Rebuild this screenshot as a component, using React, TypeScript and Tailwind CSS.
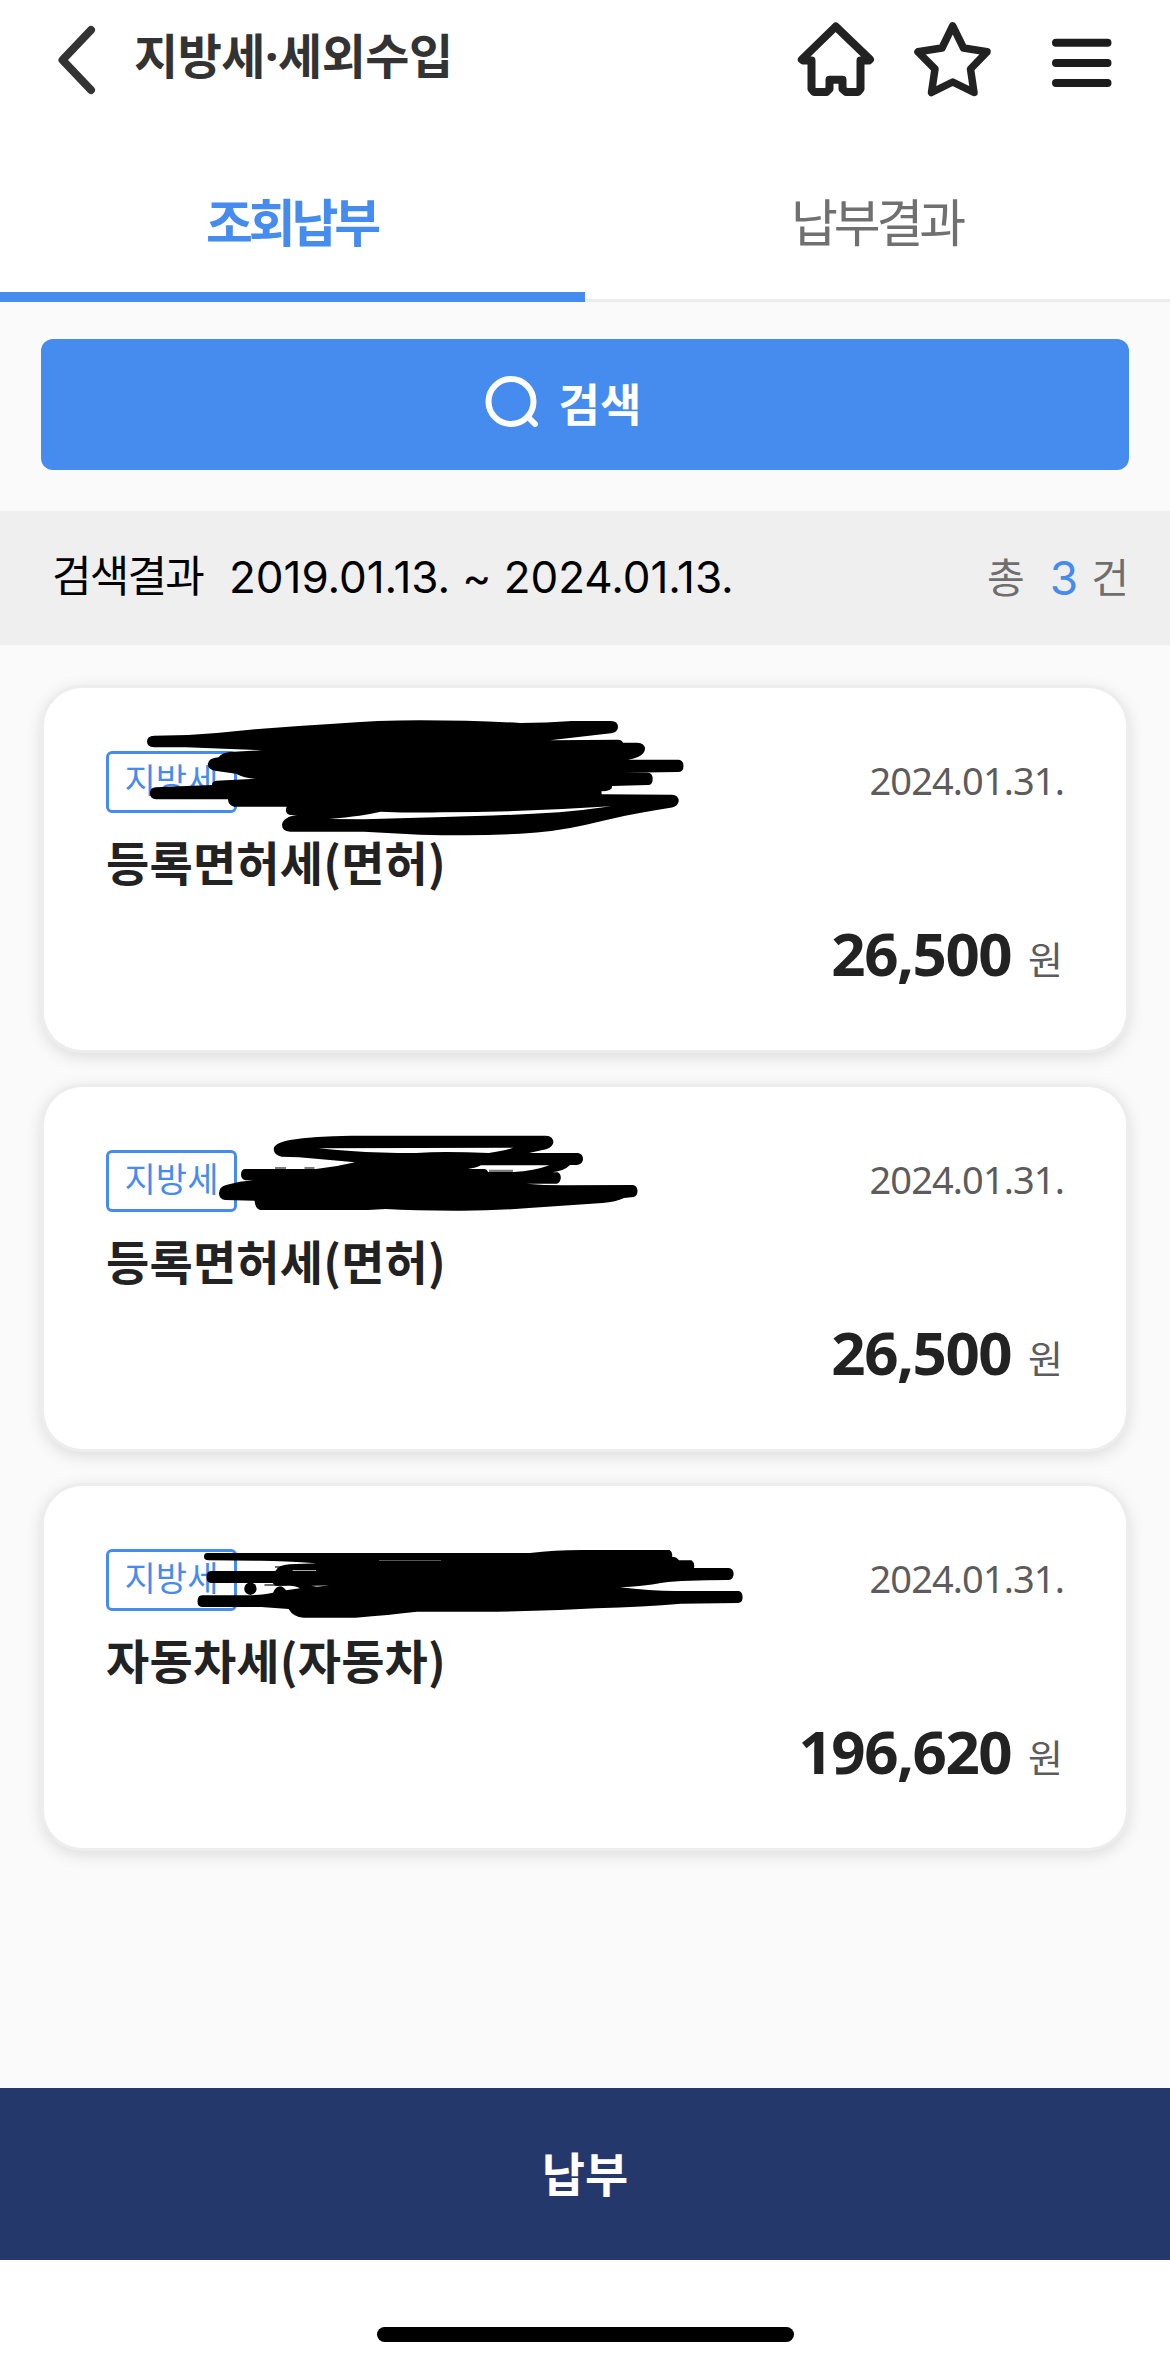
interface Bill {
  id: number;
  badge: string;
  title: string;
  dueDate: string;
  amount: string;
  scribble: React.ReactNode;
}

const bills: Bill[] = [
  {
    id: 1,
    badge: "지방세",
    title: "등록면허세(면허)",
    dueDate: "2024.01.31.",
    amount: "26,500",
    scribble: (
      <path
        fillRule="evenodd"
        d="M110 47.7L144 47Q178 45 211 41.3Q250 38 290 35.7Q335 32.3 376 32.3Q428 32.3 476 35Q502 35 528 33H567Q574 33 574 39Q574 44.5 567 45.3L506 52.3L574 51.7Q578 51.7 579 54.7H593Q601 55 601 61.3Q600 69 584 71.7H634Q639.5 72 639.5 78Q639.5 84 634 84L580 84.7H604Q608.7 85 608.7 91Q608.7 97 604 97L568 98Q569 103 557.5 103.3V106.3L628 106.7Q634.7 107 634.7 113.3Q634 118 628 119.5Q600 124 580 128Q562 132 541 137Q510 144 476 145.7Q448 147.3 420 147.3Q398 147.3 376 146.7L320 143.7H246Q238 143 238 136.7Q239 129 253 127H246Q240 125 242.7 118.7H190Q184 117 184 111.3H112Q106 111 106 105.3Q106 99.5 112 99.3L168 97Q168 93 172.5 92.7L211.5 90.7Q200 90 192 85.7L172.5 83Q164 82 163.8 76.3Q164 70 174.6 69.3Q178 65 185.5 64L218 62.3L142 59.3H110Q103 59 103 53.5Q103 48 110 47.7ZM285 131Q320 128 336.4 123.7Q370 125 398 124.3Q480 124 567 118.3Q542 122 515 124.3Q450 128 400 129L320 131.3Z"
      />
    ),
  },
  {
    id: 2,
    badge: "지방세",
    title: "등록면허세(면허)",
    dueDate: "2024.01.31.",
    amount: "26,500",
    scribble: (
      <>
        <path
          fillRule="evenodd"
          d="M229.7 62Q230 56 246 53Q270 49 307 48.7H502Q509 49 509.4 55.3Q509 60 502 62.3L485 66H534Q539 67 539 72Q539 77 533 78H526Q520 84 508.5 85.3H514Q517 87 516.8 91.3Q516 96 513 96.7H482.5Q500 98.3 519 98.3L589 98Q593.5 99 593.5 104Q593.5 109 589.6 110L580 111Q572 115 558.4 116L485 121Q448 124 411 123.7Q370 123.7 341.6 122L324 123H216Q211 121 210.6 113.7L181 113Q175 112 175 106.3Q175 100 182 98Q196 94 209.3 93.3H201.5Q197 92 197 87.7Q197 82 201.5 82H272Q292 80 311 75.3L255 70.3L237.5 69.7Q230 68 229.7 62ZM274.4 61.3L469.5 60.7Q460 64 444.8 66Q422 65 402 65Q387 65 372 66Q335 66 307 64Q290 63 274.4 61.3ZM437 78.3H505.5Q490 84 469.5 85H444Q443 82 440 82H424Q432 81 437 78.3Z"
        />
        <path className="fill-[#7b7b7b]" d="M231 80h11v2h-11zM260.5 80h10v2h-10zM445 82.7h24v2.3h-24z" />
      </>
    ),
  },
  {
    id: 3,
    badge: "지방세",
    title: "자동차세(자동차)",
    dueDate: "2024.01.31.",
    amount: "196,620",
    scribble: (
      <>
        <path className="fill-[#6b6b6b]" d="M220.5 98h22v2h-22zM231 80h14v2h-14z" />
        <path d="M163 67H486Q510 64 538 64H625.5Q629 66 628 70.7Q633 71 635 74.3H647.6Q651 77 650 82H684.5Q689.6 82.5 689.6 87.7Q689.6 93.5 684.5 94Q640 94 618.4 96.7Q598 100.5 576 101.3Q605 105 632.5 105H694.8Q698.6 106 698.6 111.3Q698.6 117 694 117L637 117.7Q600 121 552 122.3Q495 125.7 439 125.7H373Q345 129 311.6 131.7H259.7Q249 131 244.6 123L217 121H158Q153.5 121 153.5 115.3Q153.5 109.3 158 109.3H198.4Q218 109.5 229 106.7Q232 100.3 236 100.3Q239 100.3 242 104.3L256 102.3Q252 99.7 245.6 99.7H231.4L228.6 97H167.7Q162.5 97 162.5 90.7Q162.5 85 167.7 85H231.4Q234 79 245.6 78.3L272.5 77.3Q240 74.7 217 74.7L164.4 74.3Q160 74 160 70.7Q160 67 163 67Z" />
        <circle cx="206.4" cy="102.7" r="6.2" />
        <path className="fill-[#aaa]" d="M249 84H272V85H248ZM335 74.3H397V74.8H335ZM267 99.8L285 99.3L273 101Z" />
      </>
    ),
  },
];

function Header() {
  return (
    <header className="flex h-[120px] items-center bg-white px-[54px] text-[#222]">
      <svg className="h-[76px] w-[46px]" viewBox="54 22 46 76" fill="none" stroke="#333" strokeWidth="8" strokeLinecap="round" strokeLinejoin="round">
        <path d="M91 30L62.5 60L91 90" />
      </svg>
      <h1 className="-mt-[9px] ml-[34px] flex-1 text-[48px] leading-none font-bold tracking-[-0.5px] text-[#333]">
        지방세·세외수입
      </h1>
      <svg className="h-[80px] w-[80px]" viewBox="796 20 80 80" fill="none" stroke="currentColor" strokeWidth="8" strokeLinejoin="round">
        <path d="M835.7 26.5L801.8 59.5L803 60.5H811.5V89L814 92H826.5L829.5 89V79.7H842.5V89L846 92H858L860.5 89V60.5H869L870 59.5Z" />
      </svg>
      <svg className="ml-[36px] h-[80px] w-[80px]" viewBox="912 20 80 80" fill="none" stroke="currentColor" strokeWidth="7.5" strokeLinejoin="round">
        <path d="M952.7 25.8L963.5 48L987 51.8L970.5 69L974 92.5L952.7 82L931.5 92.5L935 69L918 51.8L942 48Z" />
      </svg>
      <svg className="ml-[56px] h-[80px] w-[68px]" viewBox="1048 20 68 80" fill="none" stroke="#1c1c1c" strokeWidth="8" strokeLinecap="round">
        <path d="M1056 42.7H1107.5M1056 63H1107.5M1056 83H1107.5" />
      </svg>
    </header>
  );
}

function Tabs() {
  return (
    <nav className="grid h-[182px] grid-cols-2 bg-white text-center text-[51px] tracking-[-4.2px]">
      <button className="border-b-[10px] border-[#468cee] pt-[33px] pr-[2px] font-bold text-[#468cee]">조회납부</button>
      <button className="border-b-[3px] border-[#ebebeb] pt-[26px] pr-[2px] text-[#707070]">납부결과</button>
    </nav>
  );
}

function BillCard({ bill }: { bill: Bill }) {
  return (
    <article className="relative h-[362px] rounded-[38px] bg-white px-[62px] pt-[63px] shadow-[0_0_0_3px_#ededed,0_4px_16px_3px_rgba(0,0,0,0.12)]">
      <div className="flex h-[62px] items-center justify-between">
        <span className="flex h-[62px] w-[131px] items-center justify-center rounded-[6px] border-[3px] border-[#468cee] pb-[4px] text-[34px] leading-none text-[#468cee]">
          {bill.badge}
        </span>
        <time className="pb-[4px] text-[38px] leading-none tracking-[-0.9px] text-[#5c5c5c]">{bill.dueDate}</time>
      </div>
      <h2 className="mt-[21px] font-['Noto_Sans_CJK_KR',sans-serif] text-[47px] leading-[54px] font-bold tracking-[0.2px] text-[#222]">
        {bill.title}
      </h2>
      <p className="mt-[30px] flex items-baseline justify-end gap-[17px] pr-[1px] leading-[70px]">
        <strong className="text-[60px] font-bold tracking-[-1.5px] text-[#222]">{bill.amount}</strong>
        <span className="relative -top-[2px] text-[38px] text-[#5c5c5c]">원</span>
      </p>
      <svg className="absolute top-0 left-0 h-[160px] w-[720px]" viewBox="0 0 720 160">
        {bill.scribble}
      </svg>
    </article>
  );
}

export default function App() {
  return (
    <div className="flex h-[2366px] w-[1170px] flex-col overflow-hidden bg-[#fafafa] font-['Noto_Sans','Noto_Sans_CJK_KR',sans-serif]">
      <Header />
      <Tabs />

      {/* Search */}
      <div className="px-[41px] pt-[37px] pb-[41px]">
        <button className="flex h-[131px] w-full items-center justify-center gap-[19px] rounded-[12px] bg-[#468cee] pr-[45px] text-[45px] font-bold text-white">
          <svg className="-mt-[5px] h-[56px] w-[56px]" viewBox="0 0 56 56" fill="none" stroke="white" strokeWidth="6" strokeLinecap="round">
            <circle cx="27" cy="27.5" r="22.5" />
            <path d="M44 43L51 50" />
          </svg>
          검색
        </button>
      </div>

      {/* Result summary */}
      <div className="flex h-[134px] items-center justify-between bg-[#efefef] pr-[41px] pl-[52px]">
        <p className="flex items-center gap-[26px] pb-[3px] text-black">
          <span className="text-[43px] tracking-[-1.8px]">검색결과</span>
          <span className="font-['Inter','Noto_Sans_CJK_KR',sans-serif] text-[44px] tracking-[-0.05px]">
            2019.01.13. ~ 2024.01.13.
          </span>
        </p>
        <p className="flex items-center text-[41px] text-[#6e6e6e]">
          총
          <span className="mr-[13px] ml-[25px] font-['Inter',sans-serif] text-[46px] text-[#468cee]">3</span>
          건
        </p>
      </div>

      <main className="flex flex-1 flex-col gap-[37px] px-[44px] pt-[43px]">
        {bills.map((bill) => (
          <BillCard key={bill.id} bill={bill} />
        ))}
      </main>

      <button className="h-[172px] shrink-0 bg-[#24386b] text-[47px] font-bold text-white">납부</button>
      <div className="flex h-[106px] shrink-0 justify-center bg-white pt-[67px]">
        <div className="h-[15px] w-[417px] rounded-full bg-black" />
      </div>
    </div>
  );
}
